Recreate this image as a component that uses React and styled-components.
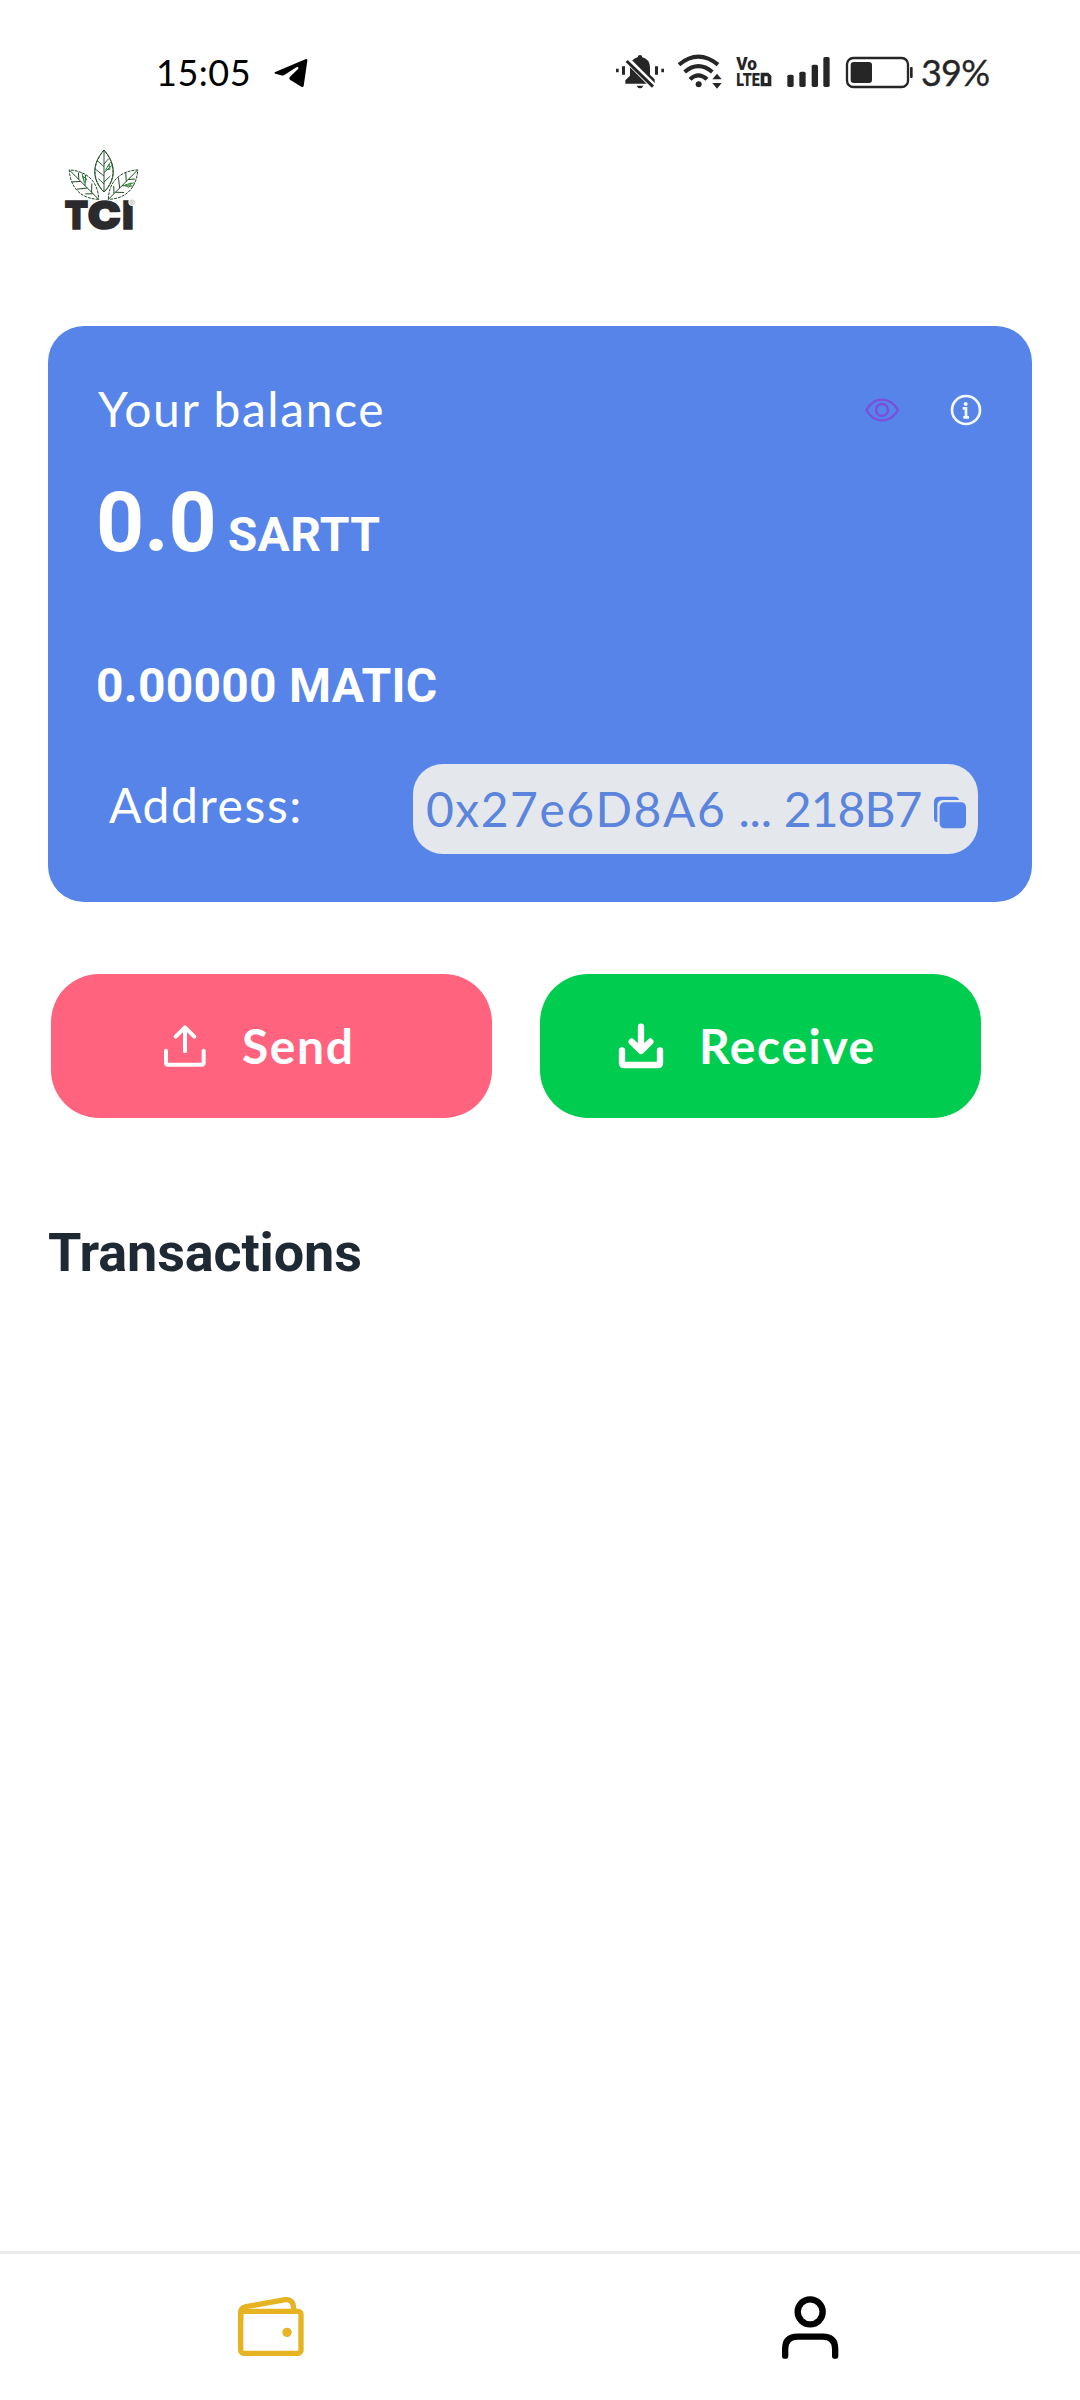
import React from "react";
import styled, { createGlobalStyle } from "styled-components";

const GlobalStyle = createGlobalStyle`
  * { box-sizing: border-box; }
  body { margin: 0; background: #fff; }
  svg { display: block; flex: none; overflow: visible; }
`;

const ui = `Lato, "Open Sans", sans-serif`;
const roboto = `Roboto, "Noto Sans", sans-serif`;

const Page = styled.div`
  width: 1080px;
  height: 2400px;
  display: flex;
  flex-direction: column;
  background: #fff;
  overflow: hidden;
`;

const StatusBar = styled.div`
  height: 146px;
  display: flex;
  align-items: center;
  padding-left: 156px;
`;

const Clock = styled.div`
  width: 116px;
  padding-bottom: 2px;
  font: 400 36px/40px ${ui};
  letter-spacing: 0.5px;
  color: #000;
  white-space: nowrap;
`;

const StatusIcons = styled.div`
  display: flex;
  align-items: center;
  gap: 12px;
  margin-left: 305px;
`;

const Percent = styled.div`
  margin-left: -6px;
  padding-bottom: 2px;
  font: 400 36px/40px ${ui};
  letter-spacing: -0.8px;
  -webkit-text-stroke: 0.3px #262626;
  color: #262626;
`;

const Header = styled.header`
  height: 180px;
  padding-left: 60px;
`;

const Card = styled.section`
  margin: 0 48px;
  height: 576px;
  padding: 53px 48px 0;
  border-radius: 36px;
  background: #5684e9;
  color: #fff;
`;

const CardTop = styled.div`
  display: flex;
  align-items: center;
  justify-content: space-between;
  height: 60px;
`;

const Label = styled.div`
  padding-left: ${(p) => p.$inset || 0}px;
  font: 400 48px/${(p) => p.$line || 60}px ${ui};
  letter-spacing: ${(p) => p.$track || 0}px;
  white-space: pre;
`;

const Part = styled.span`
  letter-spacing: ${(p) => p.$track}px;
`;

const CardTools = styled.div`
  display: flex;
  align-items: center;
  gap: 48px;
  padding-top: 2px;
`;

const Balance = styled.div`
  display: flex;
  align-items: baseline;
  margin-top: 34px;
  height: 100px;
  font: 700 84px/100px ${roboto};
`;

const Unit = styled.span`
  margin-left: 11px;
  font-size: 48px;
  letter-spacing: 0.3px;
`;

const Matic = styled.div`
  margin-top: 83px;
  font: 700 48px/60px ${roboto};
  letter-spacing: 0.25px;
`;

const AddressRow = styled.div`
  display: flex;
  justify-content: space-between;
  margin: 48px 6px 0 13px;
  height: 90px;
`;

const Pill = styled.div`
  display: flex;
  width: 565px;
  height: 90px;
  padding: 0 11px 0 13px;
  border-radius: 30px;
  background: #e4e7ec;
  color: #5b84dc;
  justify-content: space-between;
`;

const Actions = styled.div`
  display: flex;
  gap: 48px;
  margin: 72px 0 0 51px;
`;

const Action = styled.button`
  display: flex;
  align-items: center;
  width: 441px;
  height: 144px;
  padding: 0 0 0 ${(p) => p.$inset}px;
  border: 0;
  border-radius: 48px;
  background: ${(p) => p.$color};
  color: #fff;
  font: 700 48px/60px ${ui};
  letter-spacing: 1.6px;
`;

const ActionText = styled.span`
  margin-left: 34px;
  padding-bottom: 1px;
`;

const Heading = styled.h2`
  margin: 103px 0 0 48px;
  font: 700 54px/64px ${roboto};
  letter-spacing: -0.15px;
  color: #1f2933;
`;

const Spacer = styled.div`
  flex: 1;
`;

const Nav = styled.nav`
  display: flex;
  height: 149px;
  border-top: 3px solid #ebebeb;
`;

const Tab = styled.div`
  flex: 1;
  display: flex;
  align-items: center;
  justify-content: center;
`;

const TelegramIcon = () => (
  <svg width="38" height="40" viewBox="426 39 114 120">
    <path d="M434 97 L528 57 Q533 56 532 62 L521 138 Q519 143 514 140 L480 119 Q475 115 480 110 L505 86 Q507 79 499 82 L463 105 Q458 108 453 106 L436 101 Q432 99 434 97Z" fill="#000" />
  </svg>
);

const BellOffIcon = () => (
  <svg width="50" height="40" viewBox="45 39 150 120" fill="#262626">
    <path d="M114 51 V47 Q120 43 126 47 V51 Q149 57 150 82 V104 L164 118 V131 H76 V121 L90 107 V82 Q91 57 114 51Z" />
    <path d="M110 137 H130 Q127 145 120 145 Q113 145 110 137Z" />
    <path d="M78 56 L166 144" stroke="#fff" strokeWidth="19" />
    <path d="M80 63 L159 140" stroke="#262626" strokeWidth="9" />
    <path d="M48 86h8v11h-8zM66 79h9v25h-9zM165 79h9v25h-9zM184 86h8v11h-8z" />
  </svg>
);

const WifiIcon = () => (
  <svg width="46" height="40" viewBox="231 39 138 120" fill="none" stroke="#262626">
    <path d="M237 74 Q295 26 354 74" strokeWidth="12" />
    <path d="M254 96 Q295 61 337 96" strokeWidth="12" />
    <path d="M270 118 Q295 94 321 118" strokeWidth="12" />
    <circle cx="296" cy="133" r="9" fill="#262626" stroke="none" />
    <path d="M351 101l14 17h-28zM351 146l14-17h-28z" fill="#262626" stroke="none" />
  </svg>
);

const VolteIcon = () => (
  <svg width="38" height="40" viewBox="405 39 114 120" fill="#262626" fontFamily="Roboto, sans-serif" fontWeight="900">
    <text x="409" y="91" fontSize="55" textLength="62" lengthAdjust="spacingAndGlyphs">Vo</text>
    <text x="409" y="139" fontSize="56" textLength="70" lengthAdjust="spacingAndGlyphs">LTE</text>
    <path fillRule="evenodd" d="M482 98 H505 L514 107 V139 H482ZM493 109V129H503V109Z" />
  </svg>
);

const SignalIcon = () => (
  <svg width="47" height="40" viewBox="555 39 141 120" fill="#262626">
    <rect x="562" y="104" width="19" height="37" rx="5" />
    <rect x="598" y="95" width="19" height="46" rx="5" />
    <rect x="635" y="74" width="19" height="67" rx="5" />
    <rect x="670" y="51" width="19" height="90" rx="5" />
  </svg>
);

const BatteryIcon = () => (
  <svg width="71" height="40" viewBox="732 39 213 120" fill="none">
    <rect x="741" y="54" width="183" height="87" rx="19" stroke="#262626" strokeWidth="7" />
    <rect x="752" y="66" width="64" height="63" rx="9" fill="#262626" />
    <rect x="930" y="81" width="8" height="33" rx="3" fill="#262626" />
  </svg>
);

const Leaf = ({ transform }) => (
  <g transform={transform}>
    <path d="M0 0 C-36 -38 -36 -84 0 -125 C36 -84 36 -38 0 0Z" strokeDasharray="9 3" />
    <path d="M0 0V-123M0 -24L-17 -40M0 -48L-25 -68M0 -76L-20 -94M0 -30L19 -48M0 -58L24 -80M0 -84L14 -100" />
    <path d="M5 -66L15 -84L18 -68ZM11 -74L20 -91" stroke="#2f8a38" />
  </g>
);

const Logo = () => (
  <svg width="80" height="87" viewBox="60 48 240 261">
    <g fill="none" stroke="#1d4a22" strokeWidth="2.8">
      <Leaf transform="translate(176 208) rotate(-45)" />
      <Leaf transform="translate(205 208) rotate(45)" />
      <g>
        <path d="M192 186 C155 151 155 101 192 60 C229 101 229 151 192 186Z" fill="#fff" />
        <Leaf transform="translate(192 186)" />
      </g>
    </g>
    <g fill="#2b2b2d" stroke="#2b2b2d" strokeWidth="5" fontFamily="Inter, sans-serif" fontWeight="900" fontSize="117">
      <text x="74" y="298" textLength="70" lengthAdjust="spacingAndGlyphs">T</text>
      <text x="143" y="298" textLength="99" lengthAdjust="spacingAndGlyphs">C</text>
      <text x="247" y="298" textLength="34" lengthAdjust="spacingAndGlyphs">I</text>
    </g>
    <path d="M207 254L246 249" stroke="#fff" strokeWidth="6" />
    <circle cx="277" cy="216" r="12" fill="#fff" />
    <circle cx="277" cy="217" r="7" fill="none" stroke="#aaa" strokeWidth="2" />
    <path d="M275 221V214H278Q281 216 278 218H275M278 218L280 221" fill="none" stroke="#aaa" strokeWidth="1.500" />
  </svg>
);

const EyeIcon = () => (
  <svg width="36" height="36" viewBox="192 246 108 108" fill="none" stroke="#7c4edb" strokeWidth="7">
    <path d="M199 300 Q217 269 246 269 Q276 269 294 300 Q276 331 246 331 Q217 331 199 300Z" strokeLinejoin="round" />
    <circle cx="246" cy="300" r="18" />
  </svg>
);

const InfoIcon = () => (
  <svg width="36" height="36" viewBox="444 246 108 108" fill="none" stroke="#f5f9ff">
    <circle cx="498" cy="300" r="42" strokeWidth="8" />
    <circle cx="497" cy="282" r="6" fill="#f5f9ff" stroke="none" />
    <path d="M488 295H498V322M490 322H507" strokeWidth="8" />
  </svg>
);

const CopyIcon = () => (
  <svg width="34" height="90" viewBox="1181 72 102 270">
    <path d="M1190 246 Q1184 243 1184 236 V186 Q1184 170 1200 170 H1246 Q1256 170 1260 180 H1210 Q1194 182 1194 198 V246Z" fill="#5684e9" />
    <rect x="1201" y="187" width="79" height="78" rx="14" fill="#5684e9" />
  </svg>
);

const SendIcon = () => (
  <svg width="46" height="48" viewBox="366 186 138 144" fill="none" stroke="#fff" strokeWidth="12" strokeLinecap="round" strokeLinejoin="round">
    <path d="M378 272V308Q378 314 384 314H485Q491 314 491 308V272M435 274V203M407 230L435 202L463 230" />
  </svg>
);

const ReceiveIcon = () => (
  <svg width="48" height="48" viewBox="261 186 144 144" fill="none" stroke="#fff" strokeWidth="19" strokeLinecap="round" strokeLinejoin="round">
    <path d="M276 271V308Q276 315 283 315H383Q390 315 390 308V271M333 200V272M305 245L333 273L361 245" />
    <path d="M318 250H348L333 266Z" fill="#fff" strokeWidth="4" />
  </svg>
);

const WalletIcon = () => (
  <svg width="70" height="66" viewBox="104 189 210 198" fill="none" stroke="#e6b422" strokeWidth="16">
    <rect x="121" y="241" width="181" height="126" rx="9" />
    <path d="M121 270V245Q121 231 137 227L255 206Q268 204 276 215Q280 221 280 239" />
    <circle cx="260" cy="304" r="14" fill="#e6b422" stroke="none" />
  </svg>
);

const PersonIcon = () => (
  <svg width="60" height="66" viewBox="121 190 180 198" fill="none" stroke="#000" strokeWidth="19" strokeLinecap="round">
    <circle cx="211.500" cy="243.500" r="37.500" />
    <path d="M136.500 375V355Q136.500 318 174 318H249Q286.500 318 286.500 355V375" />
  </svg>
);

export default function App() {
  return (
    <Page>
      <GlobalStyle />
      <StatusBar>
        <Clock>15:05</Clock>
        <TelegramIcon />
        <StatusIcons>
          <BellOffIcon />
          <WifiIcon />
          <VolteIcon />
          <SignalIcon />
          <BatteryIcon />
          <Percent>39%</Percent>
        </StatusIcons>
      </StatusBar>
      <Header>
        <Logo />
      </Header>
      <Card>
        <CardTop>
          <Label $track={1.6} $inset={2}>Your balance</Label>
          <CardTools>
            <EyeIcon />
            <InfoIcon />
          </CardTools>
        </CardTop>
        <Balance>
          0.0<Unit>SARTT</Unit>
        </Balance>
        <Matic>0.00000 MATIC</Matic>
        <AddressRow>
          <Label $line={82} $track={1.6}>Address:</Label>
          <Pill>
            <Label $line={89} $track={1.5}>
              0x27e6D8A6<Part $track={-0.2}> ... </Part><Part $track={-1}>218B7</Part>
            </Label>
            <CopyIcon />
          </Pill>
        </AddressRow>
      </Card>
      <Actions>
        <Action $color="#ff637e" $inset={111}>
          <SendIcon />
          <ActionText>Send</ActionText>
        </Action>
        <Action $color="#00cd50" $inset={77}>
          <ReceiveIcon />
          <ActionText>Receive</ActionText>
        </Action>
      </Actions>
      <Heading>Transactions</Heading>
      <Spacer />
      <Nav>
        <Tab><WalletIcon /></Tab>
        <Tab><PersonIcon /></Tab>
      </Nav>
    </Page>
  );
}
